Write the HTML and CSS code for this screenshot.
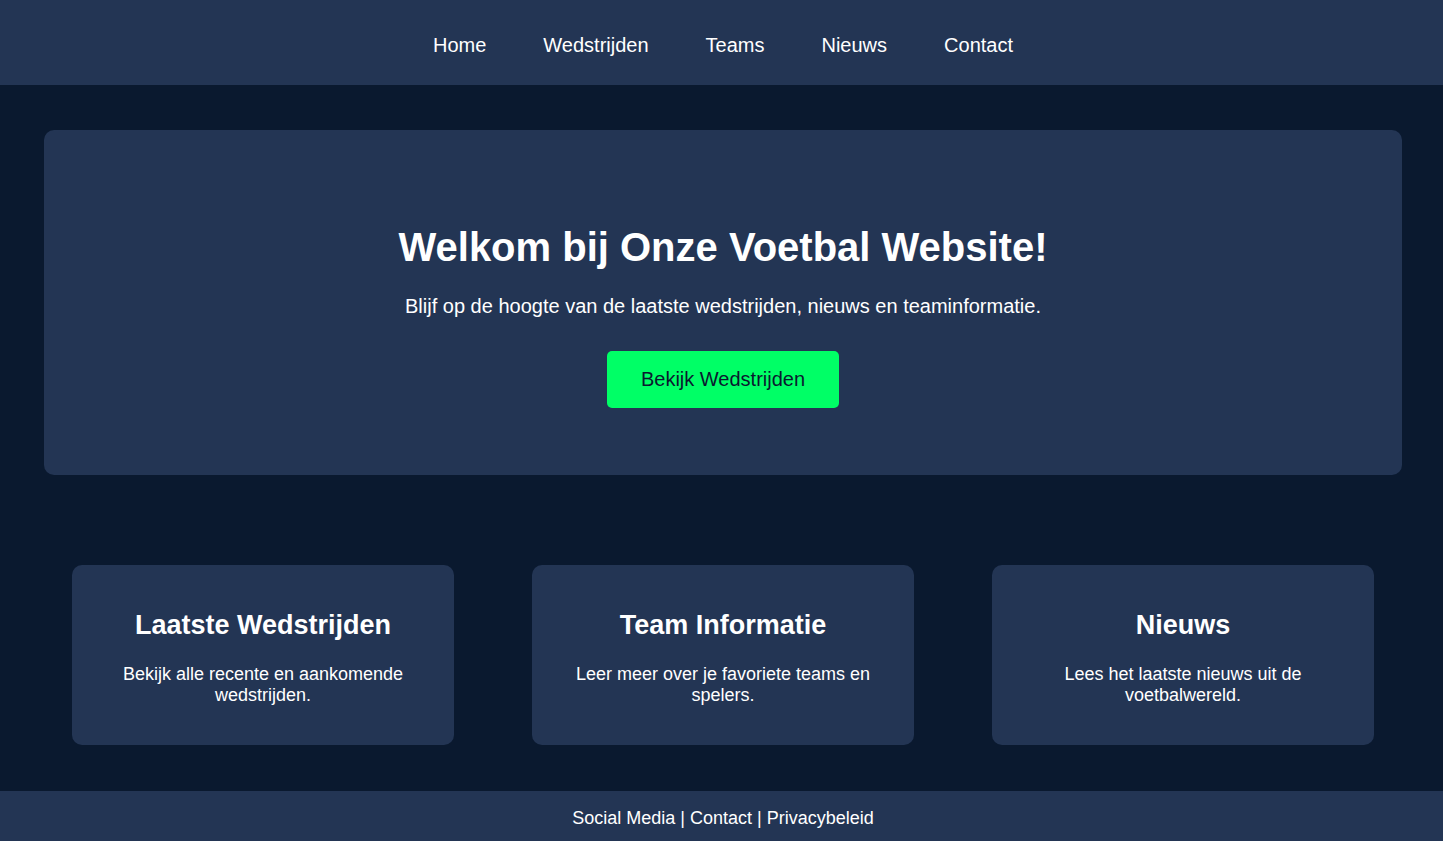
FILE: index.html
```html
<!DOCTYPE html>
<html lang="nl">
<head>
<meta charset="utf-8">
<title>Voetbal Website</title>
<link rel="stylesheet" href="styles.css">
</head>
<body>
<header class="topbar">
  <nav class="nav">
    <a class="nav-link" href="#">Home</a>
    <a class="nav-link" href="#">Wedstrijden</a>
    <a class="nav-link" href="#">Teams</a>
    <a class="nav-link" href="#">Nieuws</a>
    <a class="nav-link" href="#">Contact</a>
  </nav>
</header>
<main class="main">
  <section class="hero">
    <h1 class="hero-title">Welkom bij Onze Voetbal Website!</h1>
    <p class="hero-text">Blijf op de hoogte van de laatste wedstrijden, nieuws en teaminformatie.</p>
    <a class="btn" href="#">Bekijk Wedstrijden</a>
  </section>
  <section class="cards">
    <div class="card">
      <h2 class="card-title">Laatste Wedstrijden</h2>
      <p class="card-text">Bekijk alle recente en aankomende wedstrijden.</p>
    </div>
    <div class="card">
      <h2 class="card-title">Team Informatie</h2>
      <p class="card-text">Leer meer over je favoriete teams en spelers.</p>
    </div>
    <div class="card">
      <h2 class="card-title">Nieuws</h2>
      <p class="card-text">Lees het laatste nieuws uit de voetbalwereld.</p>
    </div>
  </section>
</main>
<footer class="footer">
  <p class="footer-text">Social Media | Contact | Privacybeleid</p>
</footer>
</body>
</html>
```

FILE: styles.css
```css
* { box-sizing: border-box; }

html, body {
  margin: 0;
  padding: 0;
}

body {
  background: #0a192f;
  color: #ffffff;
  font-family: "Liberation Sans", Arial, sans-serif;
  font-size: 18px;
  height: 841px;
  overflow: hidden;
}

.topbar {
  background: #233554;
  height: 85px;
}

.nav {
  display: flex;
  justify-content: center;
  gap: 57px;
  padding: 34px 0 28px 3px;
}

.nav-link {
  color: #ffffff;
  text-decoration: none;
  font-size: 20px;
  line-height: 23px;
}

.main {
  padding: 45px 41px 0 44px;
}

.hero {
  background: #233554;
  border-radius: 10px;
  text-align: center;
  padding: 94px 40px 67px;
}

.hero-title {
  margin: 0 0 25px;
  font-size: 40px;
  line-height: 46px;
  font-weight: bold;
}

.hero-text {
  margin: 0 0 33px;
  font-size: 20px;
  line-height: 23px;
}

.btn {
  display: inline-block;
  background: #00ff66;
  color: #0a192f;
  text-decoration: none;
  font-size: 20px;
  line-height: 23px;
  padding: 17px 34px;
  border-radius: 5px;
}

.cards {
  display: flex;
  justify-content: center;
  gap: 78px;
  margin-top: 90px;
}

.card {
  width: 382px;
  height: 180px;
  background: #233554;
  border-radius: 10px;
  text-align: center;
  padding: 45px 20px 0;
}

.card-title {
  margin: 0 0 23px;
  font-size: 27px;
  line-height: 31px;
  font-weight: bold;
}

.card-text {
  margin: 0;
  font-size: 18px;
  line-height: 21px;
}

.footer {
  margin-top: 46px;
  background: #233554;
  text-align: center;
  padding: 17px 0 12px 3px;
}

.footer-text {
  margin: 0;
  font-size: 18px;
  line-height: 21px;
}
```
